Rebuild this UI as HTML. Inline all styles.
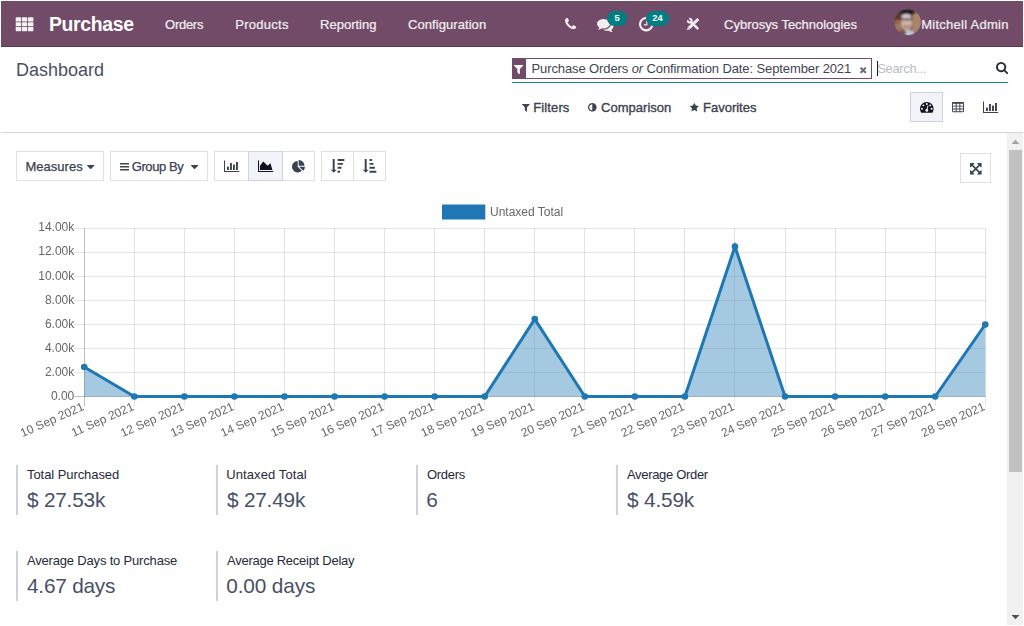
<!DOCTYPE html>
<html lang="en">
<head>
<meta charset="utf-8">
<title>Odoo - Dashboard</title>
<style>
html,body{margin:0;padding:0;background:#fff;}
body{width:1024px;height:626px;overflow:hidden;font-family:"Liberation Sans",sans-serif;}
#app{position:relative;width:1024px;height:626px;overflow:hidden;background:#fff;}
.t{position:absolute;white-space:nowrap;line-height:1;margin:0;padding:0;}
.abs{position:absolute;}
#nav{left:1px;top:1px;width:1022px;height:45px;background:#714b67;border-bottom:1px solid #5b3b52;}
.badge{position:absolute;height:15.3px;border-radius:7.65px;background:#017e84;color:#fff;font-weight:700;font-size:9.3px;line-height:15.9px;text-align:center;}
.btn{position:absolute;box-sizing:border-box;border:1px solid #dfe0e6;background:#fff;}
.btn.on{background:#f1f3f9;border-color:#cfd2dc;}
svg{position:absolute;overflow:visible;}

</style>
</head>
<body>
<div id="app">
<div id="nav" class="abs"></div>
<!-- apps grid icon -->
<svg style="left:0;top:0" width="60" height="48" viewBox="0 0 60 48">
 <g fill="#f4f0f3">
  <rect x="15.7" y="17.3" width="5.4" height="4.2" rx=".6"/><rect x="21.85" y="17.3" width="5.4" height="4.2" rx=".6"/><rect x="28.0" y="17.3" width="5.4" height="4.2" rx=".6"/>
  <rect x="15.7" y="22.15" width="5.4" height="4.2" rx=".6"/><rect x="21.85" y="22.15" width="5.4" height="4.2" rx=".6"/><rect x="28.0" y="22.15" width="5.4" height="4.2" rx=".6"/>
  <rect x="15.7" y="27.0" width="5.4" height="4.2" rx=".6"/><rect x="21.85" y="27.0" width="5.4" height="4.2" rx=".6"/><rect x="28.0" y="27.0" width="5.4" height="4.2" rx=".6"/>
 </g>
</svg>
<!-- control panel -->
<div class="abs" style="left:512px;top:82px;width:496px;height:1px;background:#11868b;"></div>
<div class="abs" style="left:512px;top:58px;width:360px;height:21px;box-sizing:border-box;border:1px solid #714b67;background:#fff;"></div>
<div class="abs" style="left:512px;top:58px;width:14px;height:21px;background:#714b67;"></div>
<div class="abs" style="left:877px;top:61px;width:1px;height:15px;background:#15192b;"></div>
<div class="abs" style="left:1px;top:132px;width:1022px;height:1px;background:#d3d6df;"></div>
<div class="btn on" style="left:910px;top:92px;width:33px;height:30px;"></div>
<!-- scrollbar -->
<div class="abs" style="left:1007px;top:133px;width:16px;height:492px;background:#f1f1f1;"></div>
<div class="abs" style="left:1009px;top:150px;width:13px;height:322px;background:#c1c1c1;"></div>
<svg style="left:1007px;top:133px" width="16" height="492" viewBox="0 0 16 492"><path d="M4.5 11 L8.5 6.8 L12.5 11 Z" fill="#a3a3a3"/><path d="M4.5 482 L12.5 482 L8.5 486.2 Z" fill="#505050"/></svg>
<!-- toolbar buttons -->
<div class="btn" style="left:16px;top:151px;width:88px;height:30px;"></div>
<div class="btn" style="left:110px;top:151px;width:98px;height:30px;"></div>
<div class="btn" style="left:214px;top:151px;width:101px;height:30px;"></div>
<div class="btn on" style="left:248px;top:151px;width:35px;height:30px;"></div>
<div class="btn" style="left:321px;top:151px;width:65px;height:30px;"></div>
<div class="abs" style="left:353px;top:152px;width:1px;height:28px;background:#dfe0e6;"></div>
<div class="btn" style="left:960px;top:153px;width:31px;height:30px;"></div>
<!-- KPI bars -->
<div class="abs" style="left:16px;top:465px;width:2px;height:50px;background:#cfd2da;"></div>
<div class="abs" style="left:216px;top:465px;width:2px;height:50px;background:#cfd2da;"></div>
<div class="abs" style="left:416px;top:465px;width:2px;height:50px;background:#cfd2da;"></div>
<div class="abs" style="left:616px;top:465px;width:2px;height:50px;background:#cfd2da;"></div>
<div class="abs" style="left:16px;top:551px;width:2px;height:50px;background:#cfd2da;"></div>
<div class="abs" style="left:216px;top:551px;width:2px;height:50px;background:#cfd2da;"></div>

<svg style="left:564.80px;top:18.40px" width="11.20" height="11.20" viewBox="0 -1408 1408 1408"><path transform="scale(1,-1)" fill="#f2eef1" d="M1408 296q0 -27 -10 -70.5t-21 -68.5q-21 -50 -122 -106q-94 -51 -186 -51q-27 0 -53 3.5t-57.5 12.5t-47 14.5t-55.5 20.5t-49 18q-98 35 -175 83q-127 79 -264 216t-216 264q-48 77 -83 175q-3 9 -18 49t-20.5 55.5t-14.5 47t-12.5 57.5t-3.5 53q0 92 51 186q56 101 106 122q25 11 68.5 21t70.5 10q14 0 21 -3q18 -6 53 -76q11 -19 30 -54t35 -63.5t31 -53.5q3 -4 17.5 -25t21.5 -35.5t7 -28.5q0 -20 -28.5 -50t-62 -55t-62 -53t-28.5 -46q0 -9 5 -22.5t8.5 -20.5t14 -24t11.5 -19q76 -137 174 -235t235 -174q2 -1 19 -11.5t24 -14t20.5 -8.5t22.5 -5q18 0 46 28.5t53 62t55 62t50 28.5q14 0 28.5 -7t35.5 -21.5t25 -17.5q25 -15 53.5 -31t63.5 -35t54 -30q70 -35 76 -53q3 -7 3 -21z"/></svg>
<svg style="left:597.10px;top:18.53px" width="16.60" height="13.04" viewBox="0 -1280 1792 1408"><path transform="scale(1,-1)" fill="#f2eef1" d="M1408 768q0 -139 -94 -257t-256.5 -186.5t-353.5 -68.5q-86 0 -176 16q-124 -88 -278 -128q-36 -9 -86 -16h-3q-11 0 -20.5 8t-11.5 21q-1 3 -1 6.5t0.5 6.5t2 6l2.5 5t3.5 5.5t4 5t4.5 5t4 4.5q5 6 23 25t26 29.5t22.5 29t25 38.5t20.5 44q-124 72 -195 177t-71 224q0 139 94 257t256.5 186.5t353.5 68.5t353.5 -68.5t256.5 -186.5t94 -257zM1792 512q0 -120 -71 -224.5t-195 -176.5q10 -24 20.5 -44t25 -38.5t22.5 -29t26 -29.5t23 -25q1 -1 4 -4.5t4.5 -5t4 -5t3.5 -5.5l2.5 -5t2 -6t0.5 -6.5t-1 -6.5q-3 -14 -13 -22t-22 -7q-50 7 -86 16q-154 40 -278 128q-90 -16 -176 -16q-271 0 -472 132q58 -4 88 -4q161 0 309 45t264 129q125 92 192 212t67 254q0 77 -23 152q129 -71 204 -178t75 -230z"/></svg>
<svg style="left:639.00px;top:17.20px" width="14.40" height="14.40" viewBox="0 -1408 1536 1536"><path transform="scale(1,-1)" fill="#f2eef1" d="M896 992v-448q0 -14 -9 -23t-23 -9h-320q-14 0 -23 9t-9 23v64q0 14 9 23t23 9h224v352q0 14 9 23t23 9h64q14 0 23 -9t9 -23zM1312 640q0 148 -73 273t-198 198t-273 73t-273 -73t-198 -198t-73 -273t73 -273t198 -198t273 -73t273 73t198 198t73 273zM1536 640q0 -209 -103 -385.5t-279.5 -279.5t-385.5 -103t-385.5 103t-279.5 279.5t-103 385.5t103 385.5t279.5 279.5t385.5 103t385.5 -103t279.5 -279.5t103 -385.5z"/></svg>
<svg style="left:514.20px;top:65.11px" width="9.20" height="9.19" viewBox="-1 -1280 1410 1408"><path transform="scale(1,-1)" fill="#ffffff" d="M1403 1241q17 -41 -14 -70l-493 -493v-742q0 -42 -39 -59q-13 -5 -25 -5q-27 0 -45 19l-256 256q-19 19 -19 45v486l-493 493q-31 29 -14 70q17 39 59 39h1280q42 0 59 -39z"/></svg>
<svg style="left:859.60px;top:66.70px" width="6.40" height="6.40" viewBox="110 -1170 1188 1188"><path transform="scale(1,-1)" fill="#6b6e78" d="M1298 214q0 -40 -28 -68l-136 -136q-28 -28 -68 -28t-68 28l-294 294l-294 -294q-28 -28 -68 -28t-68 28l-136 136q-28 28 -28 68t28 68l294 294l-294 294q-28 28 -28 68t28 68l136 136q28 28 68 28t68 -28l294 -294l294 294q28 28 68 28t68 -28l136 -136q28 -28 28 -68t-28 -68l-294 -294l294 -294q28 -28 28 -68z"/></svg>
<svg style="left:995.90px;top:62.00px" width="12.10" height="12.10" viewBox="0 -1408 1664 1664"><path transform="scale(1,-1)" fill="#22283a" d="M1152 704q0 185 -131.5 316.5t-316.5 131.5t-316.5 -131.5t-131.5 -316.5t131.5 -316.5t316.5 -131.5t316.5 131.5t131.5 316.5zM1664 -128q0 -52 -38 -90t-90 -38q-54 0 -90 38l-343 342q-179 -124 -399 -124q-143 0 -273.5 55.5t-225 150t-150 225t-55.5 273.5t55.5 273.5t150 225t225 150t273.5 55.5t273.5 -55.5t225 -150t150 -225t55.5 -273.5q0 -220 -124 -399l343 -343q37 -37 37 -90z"/></svg>
<svg style="left:522.30px;top:103.51px" width="7.80" height="7.79" viewBox="-1 -1280 1410 1408"><path transform="scale(1,-1)" fill="#3c4250" d="M1403 1241q17 -41 -14 -70l-493 -493v-742q0 -42 -39 -59q-13 -5 -25 -5q-27 0 -45 19l-256 256q-19 19 -19 45v486l-493 493q-31 29 -14 70q17 39 59 39h1280q42 0 59 -39z"/></svg>
<svg style="left:588.40px;top:103.00px" width="8.60" height="8.60" viewBox="0 -1408 1536 1536"><path transform="scale(1,-1)" fill="#3c4250" d="M768 96v1088q-148 0 -273 -73t-198 -198t-73 -273t73 -273t198 -198t273 -73zM1536 640q0 -209 -103 -385.5t-279.5 -279.5t-385.5 -103t-385.5 103t-279.5 279.5t-103 385.5t103 385.5t279.5 279.5t385.5 103t385.5 -103t279.5 -279.5t103 -385.5z"/></svg>
<svg style="left:690.30px;top:103.05px" width="8.70" height="8.30" viewBox="0 -1504 1664 1587"><path transform="scale(1,-1)" fill="#3c4250" d="M1664 889q0 -22 -26 -48l-363 -354l86 -500q1 -7 1 -20q0 -21 -10.5 -35.5t-30.5 -14.5q-19 0 -40 12l-449 236l-449 -236q-22 -12 -40 -12q-21 0 -31.5 14.5t-10.5 35.5q0 6 2 20l86 500l-364 354q-25 27 -25 48q0 37 56 46l502 73l225 455q19 41 49 41t49 -41l225 -455l502 -73q56 -9 56 -46z"/></svg>
<svg style="left:919.70px;top:102.41px" width="13.60" height="10.69" viewBox="0 -1280 1792 1408"><path transform="scale(1,-1)" fill="#11131f" d="M384 384q0 53 -37.5 90.5t-90.5 37.5t-90.5 -37.5t-37.5 -90.5t37.5 -90.5t90.5 -37.5t90.5 37.5t37.5 90.5zM576 832q0 53 -37.5 90.5t-90.5 37.5t-90.5 -37.5t-37.5 -90.5t37.5 -90.5t90.5 -37.5t90.5 37.5t37.5 90.5zM1004 351l101 382q6 26 -7.5 48.5t-38.5 29.5t-48 -6.5t-30 -39.5l-101 -382q-60 -5 -107 -43.5t-63 -98.5q-20 -77 20 -146t117 -89t146 20t89 117q16 60 -6 117t-72 91zM1664 384q0 53 -37.5 90.5t-90.5 37.5t-90.5 -37.5t-37.5 -90.5t37.5 -90.5t90.5 -37.5t90.5 37.5t37.5 90.5zM1024 1024q0 53 -37.5 90.5t-90.5 37.5t-90.5 -37.5t-37.5 -90.5t37.5 -90.5t90.5 -37.5t90.5 37.5t37.5 90.5zM1472 832q0 53 -37.5 90.5t-90.5 37.5t-90.5 -37.5t-37.5 -90.5t37.5 -90.5t90.5 -37.5t90.5 37.5t37.5 90.5zM1792 384q0 -261 -141 -483q-19 -29 -54 -29h-1402q-35 0 -54 29q-141 221 -141 483q0 182 71 348t191 286t286 191t348 71t348 -71t286 -191t191 -286t71 -348z"/></svg>
<svg style="left:952.00px;top:101.87px" width="12.00" height="10.15" viewBox="0 -1408 1664 1408"><path transform="scale(1,-1)" fill="#3c4250" d="M512 160v192q0 14 -9 23t-23 9h-320q-14 0 -23 -9t-9 -23v-192q0 -14 9 -23t23 -9h320q14 0 23 9t9 23zM512 544v192q0 14 -9 23t-23 9h-320q-14 0 -23 -9t-9 -23v-192q0 -14 9 -23t23 -9h320q14 0 23 9t9 23zM1024 160v192q0 14 -9 23t-23 9h-320q-14 0 -23 -9t-9 -23v-192q0 -14 9 -23t23 -9h320q14 0 23 9t9 23zM512 928v192q0 14 -9 23t-23 9h-320q-14 0 -23 -9t-9 -23v-192q0 -14 9 -23t23 -9h320q14 0 23 9t9 23zM1024 544v192q0 14 -9 23t-23 9h-320q-14 0 -23 -9t-9 -23v-192q0 -14 9 -23t23 -9h320q14 0 23 9t9 23zM1536 160v192q0 14 -9 23t-23 9h-320q-14 0 -23 -9t-9 -23v-192q0 -14 9 -23t23 -9h320q14 0 23 9t9 23zM1024 928v192q0 14 -9 23t-23 9h-320q-14 0 -23 -9t-9 -23v-192q0 -14 9 -23t23 -9h320q14 0 23 9t9 23zM1536 544v192q0 14 -9 23t-23 9h-320q-14 0 -23 -9t-9 -23v-192q0 -14 9 -23t23 -9h320q14 0 23 9t9 23zM1536 928v192q0 14 -9 23t-23 9h-320q-14 0 -23 -9t-9 -23v-192q0 -14 9 -23t23 -9h320q14 0 23 9t9 23zM1664 1248v-1088q0 -66 -47 -113t-113 -47h-1344q-66 0 -113 47t-47 113v1088q0 66 47 113t113 47h1344q66 0 113 -47t47 -113z"/></svg>
<svg style="left:0;top:0" width="1024" height="200" viewBox="0 0 1024 200"><g fill="#3c4250"><rect x="983" y="101.5" width="1" height="11.5"/><rect x="983" y="112" width="15.3" height="1"/><rect x="986" y="107.60" width="1.9" height="3.4"/><rect x="989" y="104.00" width="1.9" height="7.0"/><rect x="992" y="105.60" width="1.9" height="5.4"/><rect x="995" y="103.00" width="1.9" height="8.0"/></g></svg>
<svg style="left:86.70px;top:164.50px" width="7.30" height="4.11" viewBox="0 -896 1024 576"><path transform="scale(1,-1)" fill="#3c4250" d="M1024 832q0 -26 -19 -45l-448 -448q-19 -19 -45 -19t-45 19l-448 448q-19 19 -19 45t19 45t45 19h896q26 0 45 -19t19 -45z"/></svg>
<svg style="left:119.75px;top:162.93px" width="9.05" height="7.54" viewBox="0 -1280 1536 1280"><path transform="scale(1,-1)" fill="#3c4250" d="M1536 192v-128q0 -26 -19 -45t-45 -19h-1408q-26 0 -45 19t-19 45v128q0 26 19 45t45 19h1408q26 0 45 -19t19 -45zM1536 704v-128q0 -26 -19 -45t-45 -19h-1408q-26 0 -45 19t-19 45v128q0 26 19 45t45 19h1408q26 0 45 -19t19 -45zM1536 1216v-128q0 -26 -19 -45t-45 -19h-1408q-26 0 -45 19t-19 45v128q0 26 19 45t45 19h1408q26 0 45 -19t19 -45z"/></svg>
<svg style="left:191.20px;top:164.53px" width="7.20" height="4.05" viewBox="0 -896 1024 576"><path transform="scale(1,-1)" fill="#3c4250" d="M1024 832q0 -26 -19 -45l-448 -448q-19 -19 -45 -19t-45 19l-448 448q-19 19 -19 45t19 45t45 19h896q26 0 45 -19t19 -45z"/></svg>
<svg style="left:0;top:0" width="1024" height="200" viewBox="0 0 1024 200"><g fill="#3c4250"><rect x="224" y="160.5" width="1" height="11.5"/><rect x="224" y="171" width="15.3" height="1"/><rect x="227" y="166.60" width="1.9" height="3.4"/><rect x="230" y="163.00" width="1.9" height="7.0"/><rect x="233" y="164.60" width="1.9" height="5.4"/><rect x="236" y="162.00" width="1.9" height="8.0"/></g></svg>
<svg style="left:0;top:0" width="1024" height="200" viewBox="0 0 1024 200"><g fill="#11131f"><rect x="258" y="160.5" width="1" height="11.5"/><rect x="258" y="171" width="15.3" height="1"/><polygon points="270.48,163.36 272.40,170.08 259.92,170.08 259.92,165.76 263.28,161.44 267.60,165.76"/></g></svg>
<svg style="left:292.20px;top:159.54px" width="12.90" height="12.42" viewBox="0 -1536 1728 1664"><path transform="scale(1,-1)" fill="#3c4250" d="M768 646l546 -546q-106 -108 -247.5 -168t-298.5 -60q-209 0 -385.5 103t-279.5 279.5t-103 385.5t103 385.5t279.5 279.5t385.5 103v-762zM955 640h773q0 -157 -60 -298.5t-168 -247.5zM1664 768h-768v768q209 0 385.5 -103t279.5 -279.5t103 -385.5z"/></svg>
<svg style="left:331.30px;top:159.33px" width="13.40" height="13.64" viewBox="31 -1536 1761 1792"><path transform="scale(1,-1)" fill="#3c4250" d="M1216 -32v-192q0 -14 -9 -23t-23 -9h-256q-14 0 -23 9t-9 23v192q0 14 9 23t23 9h256q14 0 23 -9t9 -23zM736 96q0 -12 -10 -24l-319 -319q-10 -9 -23 -9q-12 0 -23 9l-320 320q-15 16 -7 35q8 20 30 20h192v1376q0 14 9 23t23 9h192q14 0 23 -9t9 -23v-1376h192q14 0 23 -9t9 -23zM1408 480v-192q0 -14 -9 -23t-23 -9h-448q-14 0 -23 9t-9 23v192q0 14 9 23t23 9h448q14 0 23 -9t9 -23zM1600 992v-192q0 -14 -9 -23t-23 -9h-640q-14 0 -23 9t-9 23v192q0 14 9 23t23 9h640q14 0 23 -9t9 -23zM1792 1504v-192q0 -14 -9 -23t-23 -9h-832q-14 0 -23 9t-9 23v192q0 14 9 23t23 9h832q14 0 23 -9t9 -23z"/></svg>
<svg style="left:363.40px;top:159.33px" width="13.40" height="13.64" viewBox="31 -1536 1761 1792"><path transform="scale(1,-1)" fill="#3c4250" d="M736 96q0 -12 -10 -24l-319 -319q-10 -9 -23 -9q-12 0 -23 9l-320 320q-15 16 -7 35q8 20 30 20h192v1376q0 14 9 23t23 9h192q14 0 23 -9t9 -23v-1376h192q14 0 23 -9t9 -23zM1792 -32v-192q0 -14 -9 -23t-23 -9h-832q-14 0 -23 9t-9 23v192q0 14 9 23t23 9h832q14 0 23 -9t9 -23zM1600 480v-192q0 -14 -9 -23t-23 -9h-640q-14 0 -23 9t-9 23v192q0 14 9 23t23 9h640q14 0 23 -9t9 -23zM1408 992v-192q0 -14 -9 -23t-23 -9h-448q-14 0 -23 9t-9 23v192q0 14 9 23t23 9h448q14 0 23 -9t9 -23zM1216 1504v-192q0 -14 -9 -23t-23 -9h-256q-14 0 -23 9t-9 23v192q0 14 9 23t23 9h256q14 0 23 -9t9 -23z"/></svg>
<svg style="left:969.60px;top:162.70px" width="11.60" height="11.60" viewBox="0 -1408 1536 1536"><path transform="scale(1,-1)" fill="#3c4250" d="M1283 995l-355 -355l355 -355l144 144q29 31 70 14q39 -17 39 -59v-448q0 -26 -19 -45t-45 -19h-448q-42 0 -59 40q-17 39 14 69l144 144l-355 355l-355 -355l144 -144q31 -30 14 -69q-17 -40 -59 -40h-448q-26 0 -45 19t-19 45v448q0 42 40 59q39 17 69 -14l144 -144l355 355l-355 355l-144 -144q-19 -19 -45 -19q-12 0 -24 5q-40 17 -40 59v448q0 26 19 45t45 19h448q42 0 59 -40q17 -39 -14 -69l-144 -144l355 -355l355 355l-144 144q-31 30 -14 69q17 40 59 40h448q26 0 45 -19t19 -45v-448q0 -42 -39 -59q-13 -5 -25 -5q-26 0 -45 19z"/></svg>
<!-- tools icon -->
<svg style="left:680px;top:12px" width="26" height="24" viewBox="680 12 26 24">
 <g stroke="#f2eef1" fill="none">
  <path d="M698.3 19.0 L688.9 28.1" stroke-width="3.0"/>
  <path d="M691.2 22.2 L697.5 28.3" stroke-width="2.5" stroke-linecap="round"/>
  <path d="M687.9 20.2 A1.9 1.9 0 1 0 689.2 18.85" stroke-width="2.1"/>
 </g>
 <path d="M686.9 30.0 L687.8 27.3 L689.8 29.2 Z" fill="#f2eef1"/>
</svg>
<!-- badges -->
<div class="badge" style="left:607.2px;top:10.9px;width:19.6px">5</div>
<div class="badge" style="left:646px;top:10.9px;width:23px">24</div>
<!-- avatar -->
<svg style="left:894px;top:8px" width="28" height="28" viewBox="894 8 28 28">
 <defs><clipPath id="avc"><circle cx="907.7" cy="22" r="13.15"/></clipPath>
 <filter id="avb" x="-20%" y="-20%" width="140%" height="140%"><feGaussianBlur stdDeviation="0.95"/></filter></defs>
 <g clip-path="url(#avc)">
  <rect x="893" y="7" width="30" height="30" fill="#7f5c4a"/>
  <g filter="url(#avb)">
   <rect x="912.5" y="13" width="12" height="19" fill="#a98469"/>
   <rect x="893" y="7" width="10" height="13" fill="#573a30"/>
   <rect x="893" y="23.5" width="8.5" height="8" fill="#9b7860"/>
   <ellipse cx="898.5" cy="21.2" rx="1.8" ry="1.5" fill="#b9693a"/>
   <ellipse cx="907.6" cy="12.6" rx="7.4" ry="3.2" fill="#17152b"/>
   <ellipse cx="906.6" cy="22.5" rx="5.4" ry="8.2" fill="#d3b8ae"/>
   <ellipse cx="906.2" cy="16.2" rx="4.6" ry="2.2" fill="#d4c8cc"/>
   <rect x="901.6" y="18.2" width="10.6" height="2.3" rx="1" fill="#5d4640"/>
   <ellipse cx="904.2" cy="19.4" rx="1.5" ry="1.0" fill="#8e8a98"/>
   <ellipse cx="909.4" cy="19.4" rx="1.5" ry="1.0" fill="#8e8a98"/>
   <ellipse cx="906.8" cy="26.2" rx="3.4" ry="2.2" fill="#a2766c"/>
   <ellipse cx="906.8" cy="25.6" rx="2.0" ry="0.7" fill="#e8dcdc"/>
   <ellipse cx="909.3" cy="33.6" rx="5.2" ry="3.6" fill="#b9c4d8"/>
   <ellipse cx="903" cy="33" rx="3" ry="2.6" fill="#6d5247"/>
  </g>
 </g>
</svg>

<span class="t" id="brand" style="left:48.90px;top:13px;line-height:22px;font-size:19.4px;color:#ffffff;font-weight:700;letter-spacing:-0.325px;">Purchase</span>
<span class="t" id="m1" style="left:165.10px;top:17px;line-height:15px;font-size:13px;color:#f3eef2;letter-spacing:-0.286px;-webkit-text-stroke:0.22px currentColor;">Orders</span>
<span class="t" id="m2" style="left:235.20px;top:17px;line-height:15px;font-size:13px;color:#f3eef2;letter-spacing:0.285px;-webkit-text-stroke:0.22px currentColor;">Products</span>
<span class="t" id="m3" style="left:320.10px;top:17px;line-height:15px;font-size:13px;color:#f3eef2;letter-spacing:-0.005px;-webkit-text-stroke:0.22px currentColor;">Reporting</span>
<span class="t" id="m4" style="left:408.10px;top:17px;line-height:15px;font-size:13px;color:#f3eef2;letter-spacing:0.059px;-webkit-text-stroke:0.22px currentColor;">Configuration</span>
<span class="t" id="comp" style="left:724.10px;top:17px;line-height:15px;font-size:13px;color:#f3eef2;letter-spacing:-0.024px;-webkit-text-stroke:0.22px currentColor;">Cybrosys Technologies</span>
<span class="t" id="user" style="left:921.20px;top:17px;line-height:15px;font-size:13px;color:#f3eef2;letter-spacing:0.270px;-webkit-text-stroke:0.22px currentColor;">Mitchell Admin</span>
<span class="t" id="title" style="left:16.00px;top:60px;line-height:20px;font-size:18px;color:#4a5063;letter-spacing:-0.006px;">Dashboard</span>
<span class="t" id="facet" style="left:531.50px;top:61px;line-height:15px;font-size:13px;color:#3f4452;letter-spacing:-0.107px;">Purchase Orders <i>or</i> Confirmation Date: September 2021</span>
<span class="t" id="search" style="left:877.20px;top:61px;line-height:15px;font-size:13px;color:#b9bcc4;letter-spacing:-0.327px;">Search...</span>
<span class="t" id="f1" style="left:533.20px;top:100px;line-height:15px;font-size:13px;color:#3c4250;letter-spacing:0.133px;-webkit-text-stroke:0.35px currentColor;">Filters</span>
<span class="t" id="f2" style="left:601.00px;top:100px;line-height:15px;font-size:13px;color:#3c4250;letter-spacing:0.029px;-webkit-text-stroke:0.35px currentColor;">Comparison</span>
<span class="t" id="f3" style="left:703.10px;top:100px;line-height:15px;font-size:13px;color:#3c4250;letter-spacing:-0.022px;-webkit-text-stroke:0.35px currentColor;">Favorites</span>
<span class="t" id="b1" style="left:25.38px;top:159px;line-height:15px;font-size:13px;color:#3c4250;letter-spacing:0.046px;-webkit-text-stroke:0.25px currentColor;">Measures</span>
<span class="t" id="b2" style="left:131.70px;top:159px;line-height:15px;font-size:13px;color:#3c4250;letter-spacing:-0.400px;-webkit-text-stroke:0.25px currentColor;">Group By</span>
<span class="t" id="kl1" style="left:27.00px;top:467px;line-height:15px;font-size:13px;color:#252a3a;letter-spacing:-0.071px;">Total Purchased</span>
<span class="t" id="kv1" style="left:27.00px;top:488px;line-height:23px;font-size:20.8px;color:#485069;letter-spacing:-0.213px;">$ 27.53k</span>
<span class="t" id="kl2" style="left:226.20px;top:467px;line-height:15px;font-size:13px;color:#252a3a;letter-spacing:0.100px;">Untaxed Total</span>
<span class="t" id="kv2" style="left:227.00px;top:488px;line-height:23px;font-size:20.8px;color:#485069;letter-spacing:-0.213px;">$ 27.49k</span>
<span class="t" id="kl3" style="left:427.00px;top:467px;line-height:15px;font-size:13px;color:#252a3a;letter-spacing:-0.286px;">Orders</span>
<span class="t" id="kv3" style="left:426.20px;top:488px;line-height:23px;font-size:20.8px;color:#485069;">6</span>
<span class="t" id="kl4" style="left:627.00px;top:467px;line-height:15px;font-size:13px;color:#252a3a;letter-spacing:-0.324px;">Average Order</span>
<span class="t" id="kv4" style="left:627.00px;top:488px;line-height:23px;font-size:20.8px;color:#485069;letter-spacing:-0.171px;">$ 4.59k</span>
<span class="t" id="kl5" style="left:27.00px;top:553px;line-height:15px;font-size:13px;color:#252a3a;letter-spacing:-0.181px;">Average Days to Purchase</span>
<span class="t" id="kv5" style="left:27.00px;top:574px;line-height:23px;font-size:20.8px;color:#485069;letter-spacing:-0.223px;">4.67 days</span>
<span class="t" id="kl6" style="left:227.00px;top:553px;line-height:15px;font-size:13px;color:#252a3a;letter-spacing:-0.261px;">Average Receipt Delay</span>
<span class="t" id="kv6" style="left:226.20px;top:574px;line-height:23px;font-size:20.8px;color:#485069;letter-spacing:-0.123px;">0.00 days</span>
<svg id="chart" style="left:0;top:196px;will-change:transform" width="1000" height="262" viewBox="0 196 1000 262" font-family="&quot;Liberation Sans&quot;, sans-serif" font-size="12" fill="#666">
<rect x="442" y="204.5" width="43.3" height="15" fill="#1f77b4"/>
<text x="490" y="215.5" id="legend">Untaxed Total</text>
<g><rect x="84" y="228" width="1" height="178.5" fill="rgba(0,0,0,0.25)"/><rect x="134" y="228" width="1" height="178.5" fill="rgba(0,0,0,0.1)"/><rect x="184" y="228" width="1" height="178.5" fill="rgba(0,0,0,0.1)"/><rect x="234" y="228" width="1" height="178.5" fill="rgba(0,0,0,0.1)"/><rect x="284" y="228" width="1" height="178.5" fill="rgba(0,0,0,0.1)"/><rect x="334" y="228" width="1" height="178.5" fill="rgba(0,0,0,0.1)"/><rect x="384" y="228" width="1" height="178.5" fill="rgba(0,0,0,0.1)"/><rect x="434" y="228" width="1" height="178.5" fill="rgba(0,0,0,0.1)"/><rect x="484" y="228" width="1" height="178.5" fill="rgba(0,0,0,0.1)"/><rect x="534" y="228" width="1" height="178.5" fill="rgba(0,0,0,0.1)"/><rect x="584" y="228" width="1" height="178.5" fill="rgba(0,0,0,0.1)"/><rect x="634" y="228" width="1" height="178.5" fill="rgba(0,0,0,0.1)"/><rect x="684" y="228" width="1" height="178.5" fill="rgba(0,0,0,0.1)"/><rect x="734" y="228" width="1" height="178.5" fill="rgba(0,0,0,0.1)"/><rect x="785" y="228" width="1" height="178.5" fill="rgba(0,0,0,0.1)"/><rect x="835" y="228" width="1" height="178.5" fill="rgba(0,0,0,0.1)"/><rect x="885" y="228" width="1" height="178.5" fill="rgba(0,0,0,0.1)"/><rect x="935" y="228" width="1" height="178.5" fill="rgba(0,0,0,0.1)"/><rect x="985" y="228" width="1" height="178.5" fill="rgba(0,0,0,0.1)"/><rect x="74.2" y="396" width="911.8" height="1" fill="rgba(0,0,0,0.25)"/><rect x="74.2" y="372" width="911.8" height="1" fill="rgba(0,0,0,0.1)"/><rect x="74.2" y="348" width="911.8" height="1" fill="rgba(0,0,0,0.1)"/><rect x="74.2" y="324" width="911.8" height="1" fill="rgba(0,0,0,0.1)"/><rect x="74.2" y="300" width="911.8" height="1" fill="rgba(0,0,0,0.1)"/><rect x="74.2" y="276" width="911.8" height="1" fill="rgba(0,0,0,0.1)"/><rect x="74.2" y="252" width="911.8" height="1" fill="rgba(0,0,0,0.1)"/><rect x="74.2" y="228" width="911.8" height="1" fill="rgba(0,0,0,0.1)"/></g>
<text x="74.3" y="400.20" text-anchor="end">0.00</text>
<text x="74.3" y="376.08" text-anchor="end">2.00k</text>
<text x="74.3" y="351.96" text-anchor="end">4.00k</text>
<text x="74.3" y="327.84" text-anchor="end">6.00k</text>
<text x="74.3" y="303.72" text-anchor="end">8.00k</text>
<text x="74.3" y="279.60" text-anchor="end">10.00k</text>
<text x="74.3" y="255.47" text-anchor="end">12.00k</text>
<text x="74.3" y="231.35" text-anchor="end">14.00k</text>
<text transform="translate(83.05,405.7) rotate(-24.1)" x="0" y="4.1" text-anchor="end">10 Sep 2021</text>
<text transform="translate(133.11,405.7) rotate(-24.1)" x="0" y="4.1" text-anchor="end">11 Sep 2021</text>
<text transform="translate(183.16,405.7) rotate(-24.1)" x="0" y="4.1" text-anchor="end">12 Sep 2021</text>
<text transform="translate(233.22,405.7) rotate(-24.1)" x="0" y="4.1" text-anchor="end">13 Sep 2021</text>
<text transform="translate(283.27,405.7) rotate(-24.1)" x="0" y="4.1" text-anchor="end">14 Sep 2021</text>
<text transform="translate(333.33,405.7) rotate(-24.1)" x="0" y="4.1" text-anchor="end">15 Sep 2021</text>
<text transform="translate(383.38,405.7) rotate(-24.1)" x="0" y="4.1" text-anchor="end">16 Sep 2021</text>
<text transform="translate(433.44,405.7) rotate(-24.1)" x="0" y="4.1" text-anchor="end">17 Sep 2021</text>
<text transform="translate(483.49,405.7) rotate(-24.1)" x="0" y="4.1" text-anchor="end">18 Sep 2021</text>
<text transform="translate(533.55,405.7) rotate(-24.1)" x="0" y="4.1" text-anchor="end">19 Sep 2021</text>
<text transform="translate(583.61,405.7) rotate(-24.1)" x="0" y="4.1" text-anchor="end">20 Sep 2021</text>
<text transform="translate(633.66,405.7) rotate(-24.1)" x="0" y="4.1" text-anchor="end">21 Sep 2021</text>
<text transform="translate(683.72,405.7) rotate(-24.1)" x="0" y="4.1" text-anchor="end">22 Sep 2021</text>
<text transform="translate(733.77,405.7) rotate(-24.1)" x="0" y="4.1" text-anchor="end">23 Sep 2021</text>
<text transform="translate(783.83,405.7) rotate(-24.1)" x="0" y="4.1" text-anchor="end">24 Sep 2021</text>
<text transform="translate(833.88,405.7) rotate(-24.1)" x="0" y="4.1" text-anchor="end">25 Sep 2021</text>
<text transform="translate(883.94,405.7) rotate(-24.1)" x="0" y="4.1" text-anchor="end">26 Sep 2021</text>
<text transform="translate(933.99,405.7) rotate(-24.1)" x="0" y="4.1" text-anchor="end">27 Sep 2021</text>
<text transform="translate(984.05,405.7) rotate(-24.1)" x="0" y="4.1" text-anchor="end">28 Sep 2021</text>
<polygon points="84.25,396.5 84.25,366.98 134.31,396.50 184.36,396.50 234.42,396.50 284.47,396.50 334.53,396.50 384.58,396.50 434.64,396.50 484.69,396.50 534.75,319.10 584.81,396.50 634.86,396.50 684.92,396.50 734.97,246.50 785.03,396.50 835.08,396.50 885.14,396.50 935.19,396.50 985.25,324.50 985.25,396.5" fill="rgba(31,119,180,0.4)"/>
<polyline points="84.25,366.98 134.31,396.50 184.36,396.50 234.42,396.50 284.47,396.50 334.53,396.50 384.58,396.50 434.64,396.50 484.69,396.50 534.75,319.10 584.81,396.50 634.86,396.50 684.92,396.50 734.97,246.50 785.03,396.50 835.08,396.50 885.14,396.50 935.19,396.50 985.25,324.50" fill="none" stroke="#1f77b4" stroke-width="3" stroke-linejoin="miter"/>
<circle cx="84.25" cy="366.98" r="3.3" fill="#1f77b4"/>
<circle cx="134.31" cy="396.50" r="3.3" fill="#1f77b4"/>
<circle cx="184.36" cy="396.50" r="3.3" fill="#1f77b4"/>
<circle cx="234.42" cy="396.50" r="3.3" fill="#1f77b4"/>
<circle cx="284.47" cy="396.50" r="3.3" fill="#1f77b4"/>
<circle cx="334.53" cy="396.50" r="3.3" fill="#1f77b4"/>
<circle cx="384.58" cy="396.50" r="3.3" fill="#1f77b4"/>
<circle cx="434.64" cy="396.50" r="3.3" fill="#1f77b4"/>
<circle cx="484.69" cy="396.50" r="3.3" fill="#1f77b4"/>
<circle cx="534.75" cy="319.10" r="3.3" fill="#1f77b4"/>
<circle cx="584.81" cy="396.50" r="3.3" fill="#1f77b4"/>
<circle cx="634.86" cy="396.50" r="3.3" fill="#1f77b4"/>
<circle cx="684.92" cy="396.50" r="3.3" fill="#1f77b4"/>
<circle cx="734.97" cy="246.50" r="3.3" fill="#1f77b4"/>
<circle cx="785.03" cy="396.50" r="3.3" fill="#1f77b4"/>
<circle cx="835.08" cy="396.50" r="3.3" fill="#1f77b4"/>
<circle cx="885.14" cy="396.50" r="3.3" fill="#1f77b4"/>
<circle cx="935.19" cy="396.50" r="3.3" fill="#1f77b4"/>
<circle cx="985.25" cy="324.50" r="3.3" fill="#1f77b4"/>
</svg>
</div>
</body>
</html>
